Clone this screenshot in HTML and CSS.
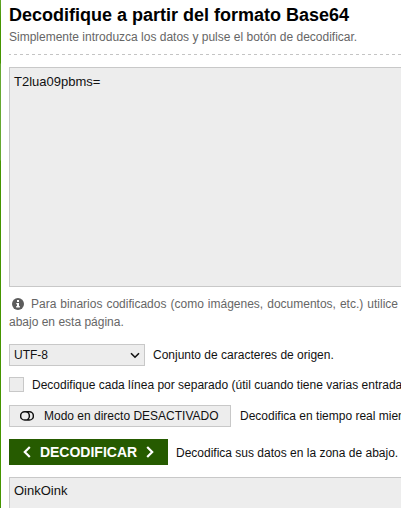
FILE: index.html
```html
<!DOCTYPE html>
<html lang="es">
<head>
<meta charset="utf-8">
<title>Decodifique a partir del formato Base64</title>
<link rel="stylesheet" href="styles.css">
</head>
<body>
<main class="page">
  <h1 class="title">Decodifique a partir del formato Base64</h1>
  <p class="subtitle">Simplemente introduzca los datos y pulse el botón de decodificar.</p>
  <svg class="divider" width="392" height="1"><path d="M0 .5H392" stroke="#c4c4c4" stroke-dasharray="3 3" stroke-dashoffset="1"/></svg>
  <div class="box input">T2lua09pbms=</div>
  <p class="note"><span class="note-line"><svg class="info" width="12" height="12" viewBox="0 0 12 12"><circle cx="6" cy="6" r="6" fill="#5c5c5c"/><path d="M5 2h2v2H5zM4.3 5H7v3h.8v1.5H4.2V8H5V6.3h-.7z" fill="#fff"/></svg>Para binarios codificados (como imágenes, documentos, etc.) utilice</span>abajo en esta página.</p>
  <div class="row select-row">
    <div class="select"><span>UTF-8</span><svg width="10" height="7" viewBox="0 0 10 7"><path d="M1 1.2l4 4 4-4" fill="none" stroke="#111" stroke-width="1.6"/></svg></div>
    <span class="label">Conjunto de caracteres de origen.</span>
  </div>
  <div class="row check-row">
    <span class="check"></span>
    <span class="label">Decodifique cada línea por separado (útil cuando tiene varias entradas</span>
  </div>
  <div class="row live-row">
    <div class="live"><svg width="14" height="10" viewBox="0 0 14 10"><path d="M4.7.8h4.6a4.1 4.1 0 0 1 0 8.2H4.7a4.1 4.1 0 0 1 0-8.2zM5.3.8a4.1 4.1 0 0 1 0 8.2" fill="none" stroke="#111" stroke-width="1.5"/></svg><span>Modo en directo DESACTIVADO</span></div>
    <span class="label">Decodifica en tiempo real mientras</span>
  </div>
  <div class="row decode-row">
    <div class="decode"><svg width="8" height="12" viewBox="0 0 8 12"><path d="M6.8 1L1.8 6l5 5" fill="none" stroke="#fff" stroke-width="2.2"/></svg><span class="decode-text">DECODIFICAR</span><svg width="8" height="12" viewBox="0 0 8 12"><path d="M1.2 1l5 5-5 5" fill="none" stroke="#fff" stroke-width="2.2"/></svg></div>
    <span class="label decode-label">Decodifica sus datos en la zona de abajo.</span>
  </div>
  <div class="box output">OinkOink</div>
</main>
</body>
</html>
```
FILE: styles.css
```css
* { box-sizing: border-box; }
html, body { margin: 0; height: 508px; overflow: hidden; }
body {
  font: 12px/18px "Liberation Sans", Arial, sans-serif;
  color: #111;
  background: linear-gradient(#60a529 0, #459500 22px, #459500 63px, #66a832 64px, #66a832 160px, #459500 161px);
}
.page {
  width: 400px;
  height: 508px;
  margin-left: 1px;
  padding: 4px 0 0 8px;
  background: #fff;
  overflow: hidden;
}
.title { margin: 0; font-size: 18px; line-height: 22px; color: #000; white-space: nowrap; }
.subtitle { margin: 2px 0 0; color: #666; white-space: nowrap; }
.divider { display: block; margin-top: 8px; }
.box {
  width: 400px;
  border: 1px solid #c8c8c8;
  background: #ededed;
  padding: 6px 4px;
  font-size: 13px;
  line-height: 15px;
}
.input { height: 220px; margin-top: 12px; }
.note { margin: 8px 0 13px; color: #666; white-space: nowrap; }
.note-line { display: flow-root; width: 389px; text-align-last: justify; }
.info { float: left; margin: 3px 7px 0 3px; }
.row { display: flex; align-items: center; white-space: nowrap; }
.select, .live {
  display: flex;
  align-items: center;
  flex: none;
  height: 22px;
  border: 1px solid #c8c8c8;
  background: #ededed;
}
.select { width: 136px; padding: 0 4px; justify-content: space-between; margin-right: 8px; }
.check-row { height: 15px; margin-top: 11px; }
.check { flex: none; width: 15px; height: 15px; margin-right: 8px; border: 1px solid #c8c8c8; background: #ededed; }
.live-row { margin-top: 13px; }
.live { width: 222px; padding-left: 10px; gap: 10px; margin-right: 9px; }
.decode-row { margin-top: 12px; }
.decode-label { padding-top: 2px; }
.decode {
  display: flex;
  align-items: center;
  flex: none;
  justify-content: center;
  width: 159px;
  height: 26px;
  gap: 9px;
  margin-right: 8px;
  background: #265b00;
  color: #fff;
  font-size: 14px;
  font-weight: bold;
}
.output { height: 60px; margin-top: 12px; padding-top: 5px; }
```
